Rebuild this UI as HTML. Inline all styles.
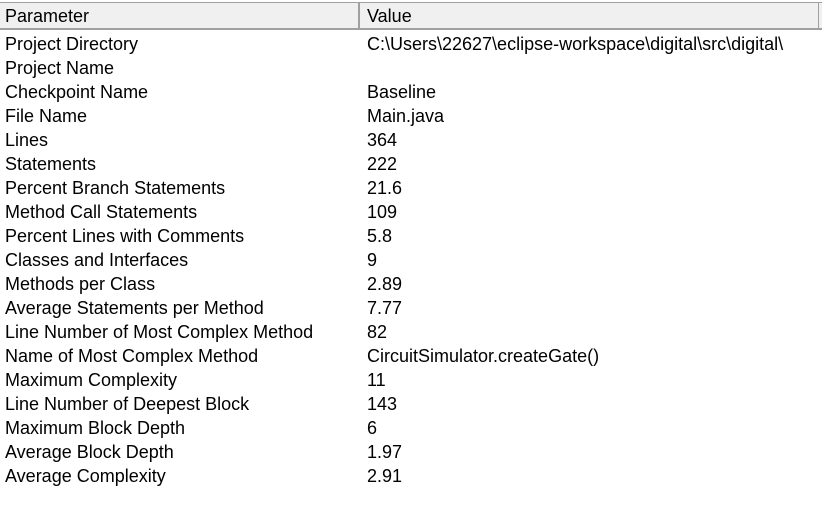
<!DOCTYPE html>
<html><head><style>
body{margin:0;width:822px;height:521px;background:#fff;overflow:hidden;font-family:"Liberation Sans",Arial,sans-serif;font-size:18px;color:#000;position:relative}
.hdr{position:absolute;left:0;top:2px;width:822px;height:25px;background:#f0f0f0;border-top:1px solid #a0a0a0;border-bottom:2px solid #a0a0a0}
.div{position:absolute;top:3px;height:25px;width:2px;background:#a0a0a0}
.t{position:absolute;white-space:nowrap;line-height:24px}
</style></head><body>
<div class="hdr"></div>
<div class="div" style="left:358px"></div>
<div class="div" style="left:818px;width:1px"></div>
<div class="t" style="left:5px;top:4px">Parameter</div>
<div class="t" style="left:367px;top:4px">Value</div>
<div class="t" style="left:5px;top:32px">Project Directory<br>Project Name<br>Checkpoint Name<br>File Name<br>Lines<br>Statements<br>Percent Branch Statements<br>Method Call Statements<br>Percent Lines with Comments<br>Classes and Interfaces<br>Methods per Class<br>Average Statements per Method<br>Line Number of Most Complex Method<br>Name of Most Complex Method<br>Maximum Complexity<br>Line Number of Deepest Block<br>Maximum Block Depth<br>Average Block Depth<br>Average Complexity</div>
<div class="t" style="left:367px;top:32px">C:\Users\22627\eclipse-workspace\digital\src\digital\<br>&nbsp;<br>Baseline<br>Main.java<br>364<br>222<br>21.6<br>109<br>5.8<br>9<br>2.89<br>7.77<br>82<br>CircuitSimulator.createGate()<br>11<br>143<br>6<br>1.97<br>2.91</div>
</body></html>
